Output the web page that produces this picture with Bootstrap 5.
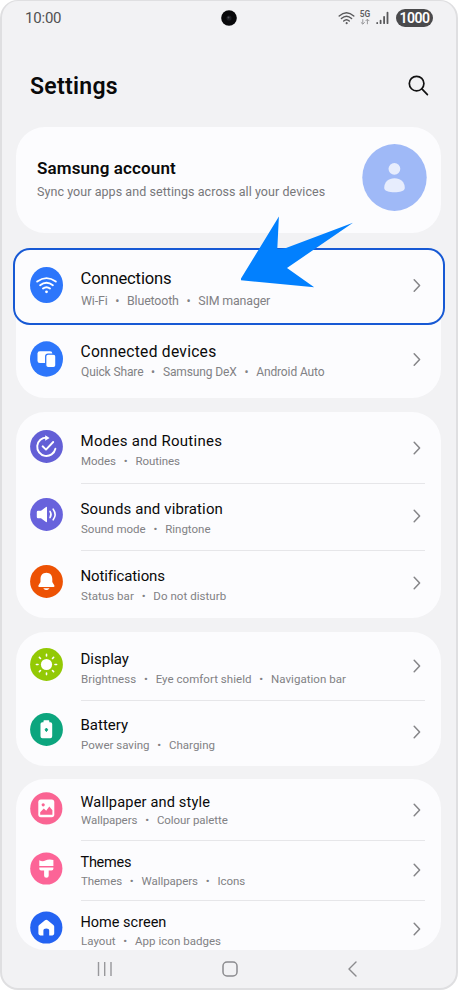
<!DOCTYPE html>
<html lang="en">
<head>
<meta charset="utf-8">
<meta name="viewport" content="width=device-width, initial-scale=1">
<title>Settings</title>
<link href="https://cdn.jsdelivr.net/npm/bootstrap@5.3.0/dist/css/bootstrap.min.css" rel="stylesheet">
<style>
body{background:#fff;font-family:Roboto,"Liberation Sans",sans-serif;color:#0a0a0a;overflow:hidden}
.phone{width:458px;height:990px;background:#f2f2f4;border:solid #dfdfe1;border-width:1px 2px 2px 2px;border-radius:18px;padding:0 15px 0 14px}
.statusbar{height:34px;padding:0 8px 0 9px;color:#505052}
.clock{font-size:15px;line-height:20px;letter-spacing:-.2px}
.camera{left:218.5px;top:9px}
.battery-pill{width:37px;height:18.5px;border-radius:9.5px;background:#4a4a4c;color:#fff;font-size:14px;font-weight:600;line-height:19px;letter-spacing:-.55px;margin-left:6px}
.page-title{height:92px;padding:18px 12px 0 14px}
.page-title h1{font-size:23px;line-height:28px;font-weight:600;letter-spacing:.3px;margin-top:20px}
.page-title svg{margin-top:22px}
.panel{background:#fcfcfe;border-radius:29px}
.account{height:106px;padding:0 14.5px 2px 21px;margin-bottom:15px}
.account h2{font-size:17px;line-height:20px;font-weight:600;letter-spacing:.12px;margin-bottom:5px}
.account p{font-size:12.5px;line-height:18px;letter-spacing:.06px;color:#77777a}
.account svg{margin-top:-3px}
.group-a{margin-bottom:14px}
.group-b{margin-bottom:14px}
.group-c{margin-bottom:13px}
.item{height:var(--h);padding:0 16px 0 14px}
.item-icon{width:33px;height:33px;margin:var(--it) 18px 0 0}
.item-body{border-bottom:1px solid #e6e6e9}
.item:last-child .item-body,.picked .item-body{border-color:transparent}
.item h3{font-size:var(--fs,15px);line-height:20px;font-weight:400;letter-spacing:var(--ls,0);margin:var(--tt) 0 var(--g) -.5px}
.item p{font-size:var(--ps,11.5px);line-height:16px;letter-spacing:var(--pls,0);color:#818184}
.item i{display:inline-block;width:19.5px;text-align:center;font-style:normal;letter-spacing:0}
.chev{margin:var(--ct) 4px 0 auto}
.picked{position:relative;border-radius:17px;background:#fcfcfe;margin:0 -4px 0 -3px;padding:0 20px 0 17px;box-shadow:inset 0 0 0 2px #1759d4}
.pointer{left:238.5px;top:214.5px;z-index:3}
.connections{--h:77px;--it:19px;--tt:20.5px;--g:4px;--ct:29.5px;--fs:16.6px;--ls:-.16px;--ps:12.4px;--pls:-.15px}
.connections .item-icon,.devices .item-icon{height:36px}
.devices{--h:73px;--it:15.5px;--tt:17px;--g:2px;--ct:26.5px;--fs:15.6px;--ls:.26px;--ps:12px;--pls:-.12px}
.modes{--h:72px;--it:18px;--tt:19px;--g:2px;--ct:29px;--ls:.28px;--pls:-.05px}
.sounds{--h:67px;--it:13.5px;--tt:15px;--g:2px;--ct:25px;--ls:.11px}
.notifications{--h:67px;--it:14px;--tt:15px;--g:2px;--ct:25px;--ls:-.11px;--pls:.05px}
.display{--h:69px;--it:15.5px;--tt:17px;--g:2px;--ct:27px;--pls:.04px}
.power{--h:65px;--it:12px;--tt:14px;--g:2px;--ct:23.5px}
.wallpaper{--h:62px;--it:13px;--tt:13px;--g:0px;--ct:24px;--fs:14.6px;--ls:.15px;--pls:-.06px}
.themes{--h:60px;--it:10.5px;--tt:11.5px;--g:.5px;--ct:22px;--fs:14.5px;--ls:-.27px;--pls:-.06px}
.home{--h:49px;--it:9.5px;--tt:11.5px;--g:.2px;--ct:21px;--fs:14.5px;--pls:.03px}
.navkeys{height:38px;padding:0 84.5px 0 81px}
</style>
</head>
<body>
<svg class="d-none">
<symbol id="chevron" viewBox="0 0 8 14"><path d="M1.2 1.2 6.6 7 1.2 12.8" fill="none" stroke="#858588" stroke-width="1.5" stroke-linecap="round" stroke-linejoin="round"/></symbol>
</svg>
<main class="phone position-relative d-flex flex-column">
<header class="statusbar d-flex align-items-center">
<span class="clock me-auto">10:00</span>
<svg class="camera position-absolute" width="16" height="16" viewBox="0 0 16 16"><circle cx="8" cy="8" r="7.8" fill="#08080a"/><circle cx="8" cy="8" r="2.6" fill="#1c1d22"/><circle cx="7.5" cy="7.6" r="1" fill="#4a4b52"/></svg>
<svg width="17" height="14" viewBox="0 0 17 14" fill="none" stroke="#59595b" stroke-width="1.4" stroke-linecap="round"><path d="M1.2 5.1Q8.5-1.5 15.8 5.1M3.4 7.6Q8.5 2.9 13.6 7.6M5.7 10Q8.5 7.4 11.3 10"/><circle cx="8.5" cy="12.1" r=".6" fill="#59595b" stroke-width="1"/></svg>
<svg class="ms-1" width="12" height="16" viewBox="0 0 12 16"><text x=".8" y="7.4" font-family="Roboto" font-size="8.4" font-weight="600" fill="#5c5c5e" textLength="10.4">5G</text><path d="M3.8 9.2V14M1.9 12.3l1.9 1.9 1.9-1.9M8.4 14.2V9.4M6.5 11.1l1.9-1.9 1.9 1.9" fill="none" stroke="#98989a" stroke-width="1"/></svg>
<svg class="ms-1" width="15" height="14" viewBox="0 0 15 14" stroke="#59595b" stroke-width="1.8" stroke-linecap="round"><path d="M2.2 12V12.2M5.6 9.6V12.2M9.1 5.8V12.2M12.5 1.6V12.2"/></svg>
<span class="battery-pill text-center">1000</span>
</header>
<div class="page-title d-flex justify-content-between align-items-start">
<h1 class="mb-0">Settings</h1>
<svg width="21" height="21" viewBox="0 0 21 21" fill="none" stroke="#111" stroke-width="1.7" stroke-linecap="round"><circle cx="8.6" cy="8.6" r="7.3"/><path d="M13.9 13.9 19.4 19.6"/></svg>
</div>
<section class="panel account d-flex align-items-center justify-content-between">
<div><h2>Samsung account</h2><p class="mb-0">Sync your apps and settings across all your devices</p></div>
<svg width="65" height="67" viewBox="0 0 65 67"><ellipse cx="32.5" cy="33.5" rx="32.2" ry="33.4" fill="#9fb9f7"/><circle cx="32.4" cy="24.8" r="5.9" fill="#e7edfd"/><path d="M22.2 44C22.2 38 26.5 34.3 32.5 34.3S42.8 38 42.8 44C42.8 49.8 22.2 49.8 22.2 44Z" fill="#e7edfd"/></svg>
</section>
<svg class="pointer position-absolute" width="114" height="74" viewBox="0 0 114 74"><path d="M37.9.5 36.3 33Q40 33.3 45 32L112 6.7 46 52 73.2 71.2-1 64.2Z" fill="#0280fe"/></svg>
<section class="panel group-a">
<div class="item picked connections d-flex">
<svg class="item-icon flex-shrink-0" viewBox="0 0 33 36"><ellipse cx="16.5" cy="18" rx="16.5" ry="18" fill="#2d76fb"/><g fill="none" stroke="#fff" stroke-width="1.9" stroke-linecap="round"><path d="M7.2 14.6Q16.5 7.6 25.8 14.6M10.1 18.2Q16.5 13.2 22.9 18.2M13 21.5Q16.5 18.9 20 21.5"/></g><circle cx="16.5" cy="24.8" r="1.4" fill="#fff"/></svg>
<div class="item-body d-flex flex-grow-1"><div><h3>Connections</h3><p class="mb-0">Wi-Fi<i>•</i>Bluetooth<i>•</i>SIM manager</p></div><svg class="chev" width="8" height="15"><use href="#chevron"/></svg></div>
</div>
<div class="item devices d-flex">
<svg class="item-icon flex-shrink-0" viewBox="0 0 33 36"><ellipse cx="16.5" cy="18" rx="16.5" ry="17.7" fill="#2d76fb"/><rect x="7.5" y="10.3" width="14.8" height="11.8" rx="2.3" fill="#fff"/><rect x="15.7" y="13.2" width="10.2" height="13.4" rx="2.4" fill="#fff" stroke="#2d76fb" stroke-width="1.3"/></svg>
<div class="item-body d-flex flex-grow-1"><div><h3>Connected devices</h3><p class="mb-0">Quick Share<i>•</i>Samsung DeX<i>•</i>Android Auto</p></div><svg class="chev" width="8" height="15"><use href="#chevron"/></svg></div>
</div>
</section>
<section class="panel group-b">
<div class="item modes d-flex">
<svg class="item-icon flex-shrink-0" viewBox="0 0 33 33"><circle cx="16.5" cy="16.5" r="16.4" fill="#635fd6"/><g fill="none" stroke="#fff" stroke-width="1.9" stroke-linecap="round" stroke-linejoin="round"><path d="M16.8 7.6A9.2 9.2 0 1 0 25.4 18.8M12.6 16.3 16 19.6 23.2 12"/></g><path d="M15.2 5.3 19.6 8.1 15.2 10.8Z" fill="#fff"/></svg>
<div class="item-body d-flex flex-grow-1"><div><h3>Modes and Routines</h3><p class="mb-0">Modes<i>•</i>Routines</p></div><svg class="chev" width="8" height="14"><use href="#chevron"/></svg></div>
</div>
<div class="item sounds d-flex">
<svg class="item-icon flex-shrink-0" viewBox="0 0 33 33"><circle cx="16.5" cy="16.5" r="16.4" fill="#6862dc"/><path d="M8 12.8H11L16 9Q17 8.5 17 9.7V23.3Q17 24.5 16 24L11 20.2H8Q6.8 20.2 6.8 19V14Q6.8 12.8 8 12.8Z" fill="#fff"/><path d="M20 13.4Q22.1 16.5 20 19.6M23.2 11.2Q27 16.5 23.2 21.8" fill="none" stroke="#fff" stroke-width="1.6" stroke-linecap="round"/></svg>
<div class="item-body d-flex flex-grow-1"><div><h3>Sounds and vibration</h3><p class="mb-0">Sound mode<i>•</i>Ringtone</p></div><svg class="chev" width="8" height="14"><use href="#chevron"/></svg></div>
</div>
<div class="item notifications d-flex">
<svg class="item-icon flex-shrink-0" viewBox="0 0 33 33"><circle cx="16.5" cy="16.5" r="16.4" fill="#ed5204"/><path d="M16.4 7.8C12.5 7.8 10.5 10.6 10.5 14V17L8.4 20.4Q8 22 9.4 22H23.4Q24.8 22 24.4 20.4L22.3 17V14C22.3 10.6 20.3 7.8 16.4 7.8ZM13.2 23.2Q16.4 27 19.6 23.2Z" fill="#fff"/></svg>
<div class="item-body d-flex flex-grow-1"><div><h3>Notifications</h3><p class="mb-0">Status bar<i>•</i>Do not disturb</p></div><svg class="chev" width="8" height="14"><use href="#chevron"/></svg></div>
</div>
</section>
<section class="panel group-c">
<div class="item display d-flex">
<svg class="item-icon flex-shrink-0" viewBox="0 0 33 33"><circle cx="16.5" cy="16.5" r="16.4" fill="#93c905"/><circle cx="16.5" cy="16.5" r="5.6" fill="#fff"/><path d="M16.5 6.4V8M16.5 25V26.6M6.4 16.5H8M25 16.5H26.6M9.4 9.4 10.5 10.5M22.5 22.5 23.6 23.6M9.4 23.6 10.5 22.5M22.5 10.5 23.6 9.4" stroke="#fff" stroke-width="1.6" stroke-linecap="round"/></svg>
<div class="item-body d-flex flex-grow-1"><div><h3>Display</h3><p class="mb-0">Brightness<i>•</i>Eye comfort shield<i>•</i>Navigation bar</p></div><svg class="chev" width="8" height="14"><use href="#chevron"/></svg></div>
</div>
<div class="item power d-flex">
<svg class="item-icon flex-shrink-0" viewBox="0 0 33 33"><circle cx="16.5" cy="16.5" r="16.4" fill="#0ca57e"/><path d="M14.2 7.3H18.6Q19.3 7.3 19.3 8V9.2H20.3Q22.2 9.2 22.2 11.1V23.3Q22.2 25.2 20.3 25.2H12.4Q10.5 25.2 10.5 23.3V11.1Q10.5 9.2 12.4 9.2H13.5V8Q13.5 7.3 14.2 7.3Z" fill="#fff"/><path d="M16.4 15 17.7 16.8 16.4 18.6 15.1 16.8Z" fill="#0ca57e" stroke="#0ca57e" stroke-linejoin="round"/></svg>
<div class="item-body d-flex flex-grow-1"><div><h3>Battery</h3><p class="mb-0">Power saving<i>•</i>Charging</p></div><svg class="chev" width="8" height="14"><use href="#chevron"/></svg></div>
</div>
</section>
<section class="panel group-d">
<div class="item wallpaper d-flex">
<svg class="item-icon flex-shrink-0" viewBox="0 0 33 33"><circle cx="16.3" cy="16.4" r="16.1" fill="#fa6493"/><rect x="8.3" y="7.6" width="16" height="17.6" rx="2.6" fill="#fff"/><circle cx="13.2" cy="12.8" r="1.6" fill="#fa6493"/><path d="M10.2 22.8V20.2L13.8 16.6 16.2 18.8 19.3 14.5 22.4 18.3V22.8Z" fill="#fa6493"/></svg>
<div class="item-body d-flex flex-grow-1"><div><h3>Wallpaper and style</h3><p class="mb-0">Wallpapers<i>•</i>Colour palette</p></div><svg class="chev" width="8" height="14"><use href="#chevron"/></svg></div>
</div>
<div class="item themes d-flex">
<svg class="item-icon flex-shrink-0" viewBox="0 0 33 33"><circle cx="16.3" cy="16.5" r="16.1" fill="#fc6497"/><path d="M9.3 8.2Q12.5 10 15.3 8.5 18.5 7 23.4 8V13.9H9.3ZM9.3 15.4H23.4V16.8Q23.4 18.6 21.6 18.6H18.7V23.8Q18.7 25.8 16.4 25.8T14.1 23.8V18.6H11.1Q9.3 18.6 9.3 16.8Z" fill="#fff"/></svg>
<div class="item-body d-flex flex-grow-1"><div><h3>Themes</h3><p class="mb-0">Themes<i>•</i>Wallpapers<i>•</i>Icons</p></div><svg class="chev" width="8" height="14"><use href="#chevron"/></svg></div>
</div>
<div class="item home d-flex">
<svg class="item-icon flex-shrink-0" viewBox="0 0 33 33"><circle cx="16.3" cy="16.5" r="16.1" fill="#2463f2"/><path d="M15 9.2Q16.3 8.2 17.6 9.2L23.4 13.9Q24.2 14.6 24.2 15.6V22.6Q24.2 24.4 22.4 24.4H19.2V19.5Q19.2 17.5 16.3 17.5T13.4 19.5V24.4H10.2Q8.4 24.4 8.4 22.6V15.6Q8.4 14.6 9.2 13.9Z" fill="#fff"/></svg>
<div class="item-body d-flex flex-grow-1"><div><h3>Home screen</h3><p class="mb-0">Layout<i>•</i>App icon badges</p></div><svg class="chev" width="8" height="14"><use href="#chevron"/></svg></div>
</div>
</section>
<nav class="navkeys d-flex align-items-center justify-content-between" aria-label="System keys">
<svg width="15" height="16" viewBox="0 0 15 16"><path d="M1.5 1V15M7.7 1V15M14 1V15" stroke="#98989b" stroke-width="1.4"/></svg>
<svg width="16" height="16" viewBox="0 0 16 16"><rect x="1" y="1" width="14" height="14" rx="4" fill="none" stroke="#8b8b8e" stroke-width="1.5"/></svg>
<svg width="9" height="16" viewBox="0 0 9 16"><path d="M8 .9 1 8 8 15.1" fill="none" stroke="#8b8b8e" stroke-width="1.4" stroke-linecap="round" stroke-linejoin="round"/></svg>
</nav>
</main>
<script src="https://cdn.jsdelivr.net/npm/bootstrap@5.3.0/dist/js/bootstrap.bundle.min.js"></script>
</body>
</html>
